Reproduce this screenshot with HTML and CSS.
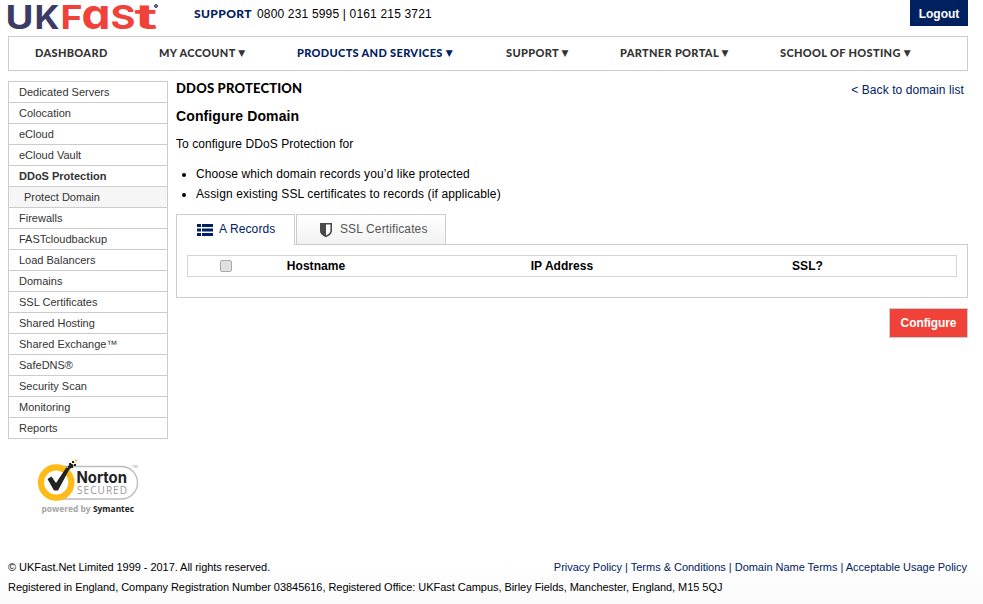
FILE: index.html
```html
<!DOCTYPE html>
<html lang="en">
<head>
<meta charset="utf-8">
<title>DDoS Protection</title>
<link rel="stylesheet" href="styles.css">
</head>
<body>
<header class="top">
  <svg class="logo" width="152" height="36" viewBox="8 0 152 36" role="img" aria-label="UKFast">
    <g class="wordmark">
      <text class="navy" x="5.500" y="28.800" font-size="32.500" textLength="28" lengthAdjust="spacingAndGlyphs">U</text>
      <text class="navy" x="34.500" y="28.800" font-size="32.500" textLength="25" lengthAdjust="spacingAndGlyphs">K</text>
      <text class="red" x="60.500" y="28.800" font-size="32.500" textLength="22" lengthAdjust="spacingAndGlyphs">F</text>
      <text class="red alt" x="81.500" y="28.500" font-size="41" textLength="29" lengthAdjust="spacingAndGlyphs">a</text>
      <text class="red" x="110.500" y="28.500" font-size="32" textLength="25" lengthAdjust="spacingAndGlyphs">S</text>
      <text class="red" x="134.500" y="28.500" font-size="34" textLength="23" lengthAdjust="spacingAndGlyphs">t</text>
    </g>
    <circle cx="156" cy="6" r="1.5" fill="#8a89a4" stroke="#3c3b66"/>
  </svg>
  <div class="phone"><strong class="display">SUPPORT</strong><span>0800 231 5995 | 0161 215 3721</span></div>
  <a class="logout">Logout</a>
</header>
<nav class="nav display">
  <a class="n1">DASHBOARD</a>
  <a class="n2">MY ACCOUNT <i>▼</i></a>
  <a class="n3 current">PRODUCTS AND SERVICES <i>▼</i></a>
  <a class="n4">SUPPORT <i>▼</i></a>
  <a class="n5">PARTNER PORTAL <i>▼</i></a>
  <a class="n6">SCHOOL OF HOSTING <i>▼</i></a>
</nav>
<div class="columns">
  <aside class="side">
    <ul class="menu">
      <li>Dedicated Servers</li>
      <li>Colocation</li>
      <li>eCloud</li>
      <li>eCloud Vault</li>
      <li class="active">DDoS Protection</li>
      <li class="sub">Protect Domain</li>
      <li>Firewalls</li>
      <li>FASTcloudbackup</li>
      <li>Load Balancers</li>
      <li>Domains</li>
      <li>SSL Certificates</li>
      <li>Shared Hosting</li>
      <li>Shared Exchange™</li>
      <li>SafeDNS®</li>
      <li>Security Scan</li>
      <li>Monitoring</li>
      <li>Reports</li>
    </ul>
    <svg class="norton" width="104" height="58" viewBox="36 458 104 58">
      <rect x="48" y="466.5" width="89.500" height="32.5" rx="16.2" fill="#fff" stroke="#bcbcbc" stroke-width="1.4"/>
      <circle cx="56.2" cy="482.5" r="15.2" fill="#fff" stroke="#fdbb17" stroke-width="6.2"/>
      <path d="M47.5 479L51.5 476.500L56 483L66 468L71 463.5L74 465L69 470L58 490.5L54 490.5Z" fill="#222"/>
      <path d="M69 463h2v2h-2zM72 461h2v2h-2zM74 464h2v2h-2zM71 466h2v2h-2z" fill="#222"/>
      <path d="M75 459.5h2v2h-2zM71 463h1v1h-1zM74 462h1v1h-1zM67 467h1v1h-1z" fill="#fdbb17"/>
      <text x="76.500" y="482.5" class="n-name" textLength="50.500" lengthAdjust="spacingAndGlyphs">Norton</text>
      <text x="77" y="494" class="n-sec" textLength="50" lengthAdjust="spacing">SECURED</text>
      <text x="132" y="468" class="n-tm">TM</text>
      <text x="41.5" y="511.5" class="n-pow" textLength="49" lengthAdjust="spacingAndGlyphs">powered by</text>
      <text x="93" y="511.5" class="n-sym" textLength="41" lengthAdjust="spacingAndGlyphs">Symantec</text>
    </svg>
  </aside>
  <main class="main">
    <div class="title-row"><h1 class="display">DDOS PROTECTION</h1><a class="back">&lt; Back to domain list</a></div>
    <h2>Configure Domain</h2>
    <p class="intro">To configure DDoS Protection for</p>
    <ul class="steps">
      <li>Choose which domain records you’d like protected</li>
      <li>Assign existing SSL certificates to records (if applicable)</li>
    </ul>
    <div class="tabs">
      <div class="tab on">
        <svg width="17" height="14" viewBox="0 0 17 14" fill="#00215f"><path d="M0 1h4v3H0zM5 1h11v3H5zM0 5.500h4v3H0zM5 5.500h11v3H5zM0 10h4v3H0zM5 10h11v3H5z"/></svg>
        <span>A Records</span>
      </div>
      <div class="tab off">
        <svg width="12" height="14" viewBox="0 0 12 14"><path d="M.8.8H11.200V7.500C11.200 10 9 12 6 13.200C3 12 .8 10 .8 7.500Z" fill="#fff" stroke="#4a4a4a" stroke-width="1.600"/><path d="M0 0H6V14C2.500 12.600 0 10.500 0 7.500Z" fill="#4a4a4a"/></svg>
        <span>SSL Certificates</span>
      </div>
    </div>
    <section class="panel">
      <div class="thead">
        <span class="check"><input type="checkbox" class="box" aria-label="Select all"></span>
        <b>Hostname</b><b>IP Address</b><b>SSL?</b>
      </div>
    </section>
    <button class="configure">Configure</button>
  </main>
</div>
<footer class="foot">
  <div class="legal"><span class="copy">© UKFast.Net Limited 1999 - 2017. All rights reserved.</span>
  <span class="links"><a>Privacy Policy</a> | <a>Terms &amp; Conditions</a> | <a>Domain Name Terms</a> | <a>Acceptable Usage Policy</a></span></div>
  <div class="reg">Registered in England, Company Registration Number 03845616, Registered Office: UKFast Campus, Birley Fields, Manchester, England, M15 5QJ</div>
</footer>
</body>
</html>
```
FILE: styles.css
```css
* { box-sizing: border-box; }
body { margin: 0; width: 983px; height: 604px; padding: 0 15px 0 8px; overflow: hidden; display: flex; flex-direction: column; background: linear-gradient(#fff 560px, #fbfbfb 604px); color: #000; font: 12px/20px "Liberation Sans", Arial, sans-serif; }
ul { list-style: none; margin: 0; padding: 0; }
h1, h2, p { margin: 0; }
.display { font-family: Lato, sans-serif; font-weight: 900; }
.top { display: flex; height: 36px; align-items: flex-start; }
.logo { overflow: visible; }
.wordmark { font-family: Inter, sans-serif; font-weight: 700; }
.navy { fill: #3c3b66; }
.red { fill: #f04238; }
.alt { font-feature-settings: "cv11", "ss01"; }
.phone { display: flex; gap: 5px; padding: 4px 0 0 34px; }
.phone strong { color: #00215f; font-size: 12px; letter-spacing: .4px; }
.phone span { letter-spacing: .17px; }
.logout { margin-left: auto; width: 58px; height: 26px; line-height: 28px; background: #00215f; color: #fff; font-weight: bold; text-align: center; }
.nav { display: flex; height: 35px; width: 960px; border: 1px solid #ccc; padding-left: 26px; line-height: 31px; font-size: 11px; letter-spacing: .33px; color: #333; white-space: nowrap; }
.nav i { font: 9px "DejaVu Sans", sans-serif; vertical-align: 1px; }
.nav .current { color: #00215f; }
.n1 { width: 124px; }
.n2 { width: 138px; }
.n3 { width: 209px; }
.n4 { width: 114px; }
.n5 { width: 160px; }
.columns { display: flex; gap: 8px; padding-top: 10px; height: 486px; }
.side { width: 160px; }
.menu { border: 1px solid #ccc; border-bottom: 0; font-size: 11px; color: #333; }
.menu li { height: 21px; line-height: 21px; padding-left: 10px; border-bottom: 1px solid #ccc; }
.menu .active { font-weight: bold; }
.menu .sub { padding-left: 15px; background: #f6f6f6; }
.norton { display: block; margin: 19px 0 0 28px; }
.n-name { font: bold 16px Inter, sans-serif; fill: #222; }
.n-sec { font: 500 10px "Open Sans", sans-serif; fill: #999; }
.n-tm { font: 4px "Open Sans", sans-serif; fill: #999; }
.n-pow { font: bold 8.500px "Open Sans", sans-serif; fill: #a5a5a5; }
.n-sym { font: bold 8.500px "Open Sans", sans-serif; fill: #222; }
.main { width: 792px; display: flex; flex-direction: column; }
.title-row { display: flex; justify-content: space-between; height: 25px; }
h1 { font-size: 13px; line-height: 14px; letter-spacing: .2px; }
.back { color: #00215f; line-height: 18px; padding-right: 4px; letter-spacing: .08px; }
h2 { font-size: 14px; line-height: 20px; height: 28px; letter-spacing: .12px; }
.intro { height: 30px; line-height: 20px; letter-spacing: .06px; }
.steps { list-style: disc; padding-left: 20px; height: 50px; letter-spacing: .12px; }
.tabs { display: flex; gap: 1px; height: 31px; margin-bottom: -1px; }
.tab { display: flex; align-items: center; border: 1px solid #ccc; letter-spacing: .12px; }
.tab span { padding-bottom: 2px; }
.on { width: 119px; height: 31px; background: #fff; border-bottom: 0; padding-left: 20px; gap: 5px; color: #00215f; position: relative; }
.off { width: 150px; height: 30px; background: linear-gradient(#fff, #f2f2f2); padding-left: 23px; gap: 8px; color: #555; border-bottom: 0; }
.panel { height: 54px; border: 1px solid #ccc; padding: 10px; }
.thead { display: grid; grid-template-columns: 77px 102px 390px 101px 98px; width: 770px; height: 22px; border: 1px solid #d5d5d5; line-height: 20px; text-align: center; letter-spacing: .05px; }
.box { appearance: none; display: block; width: 12px; height: 12px; margin: 4px 0 0 32px; border: 1px solid #aaa; border-radius: 2px; background: #e1e1e1; }
.configure { align-self: flex-end; width: 79px; height: 30px; margin-top: 10px; padding: 0; border: 1px solid #ccc; background: #f04238; color: #fff; font: bold 12px "Liberation Sans", sans-serif; letter-spacing: -.1px; }
.foot { font-size: 11px; letter-spacing: -.05px; }
.legal { display: flex; justify-content: space-between; }
.links { color: #00215f; padding-right: 1px; letter-spacing: -.02px; }
```
